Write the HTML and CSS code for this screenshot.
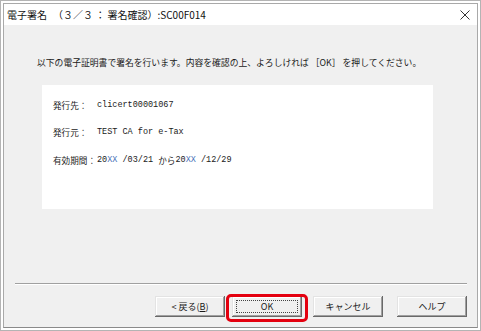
FILE: index.html
```html
<!DOCTYPE html>
<html lang="ja">
<head>
<meta charset="utf-8">
<title>電子署名</title>
<link rel="stylesheet" href="styles.css">
</head>
<body>
<div class="window">
  <div class="frame">
    <div class="titlebar">
      <span class="title"><span>電子署名</span><span class="title-sub">（３／３ ： 署名確認）:SC00F014</span></span>
      <svg class="close" width="10" height="10" viewBox="0 0 10 10" aria-label="閉じる">
        <path d="M0.5 0.5 L9.5 9.5 M9.5 0.5 L0.5 9.5" stroke="#333" stroke-width="1" fill="none"/>
      </svg>
    </div>
    <div class="content">
      <p class="intro">以下の電子証明書で署名を行います。内容を確認の上、よろしければ ［OK］ を押してください。</p>
      <div class="panel">
        <div class="row"><span class="label">発行先：</span><span class="val">clicert00001067</span></div>
        <div class="row"><span class="label">発行元：</span><span class="val">TEST CA for e-Tax</span></div>
        <div class="row"><span class="label">有効期間：</span><span class="val">20<span class="xx">XX</span> /03/21 </span><span class="kara">から</span><span class="val">20<span class="xx">XX</span> /12/29</span></div>
      </div>
      <div class="spacer"></div>
      <div class="separator"></div>
      <div class="buttons">
        <button class="btn btn-back">&lt; 戻る(<u>B</u>)</button>
        <button class="btn btn-ok"><span class="focus">OK</span><span class="ring"></span></button>
        <button class="btn btn-cancel">キャンセル</button>
        <button class="btn btn-help">ヘルプ</button>
      </div>
    </div>
  </div>
</div>
</body>
</html>
```

FILE: styles.css
```css
* {
  box-sizing: border-box;
}

html, body {
  margin: 0;
  padding: 0;
  background: #ffffff;
}

body {
  font-family: "Noto Sans CJK JP", "Liberation Sans", sans-serif;
  color: #1a1a1a;
}

.window {
  width: 481px;
  height: 331px;
  border: 1px solid #b4b4b4;
  padding: 2px;
  background: #ffffff;
}

.frame {
  height: 100%;
  display: flex;
  flex-direction: column;
  border: 1px solid #a9a9a9;
  border-bottom-color: #8a8a8a;
}

.titlebar {
  height: 21px;
  flex: none;
  display: flex;
  align-items: center;
  justify-content: space-between;
  padding: 0 7px 0 3px;
  background: #ffffff;
}

.title {
  font-size: 10px;
  line-height: 12px;
  color: #111;
  white-space: nowrap;
}

.title-sub {
  margin-left: 6px;
}

.close {
  display: block;
  margin-top: 1px;
}

.content {
  flex: 1;
  display: flex;
  flex-direction: column;
  background: #f0f0f0;
  padding: 32px 10px 10px 11px;
}

.intro {
  margin: 0 0 16px 22px;
  font-size: 8.8px;
  line-height: 12px;
  white-space: nowrap;
  color: #1a1a1a;
}

.panel {
  margin-left: 27px;
  width: 391px;
  height: 124px;
  background: #ffffff;
  padding: 6px 0 0 11px;
}

.row {
  display: flex;
  align-items: center;
  height: 27.5px;
  font-size: 8.6px;
  line-height: 12px;
  white-space: nowrap;
  color: #1a1a1a;
}

.label {
  flex: none;
  width: 44px;
}

.kara {
  flex: none;
}

.val {
  flex: none;
  font-family: "Liberation Mono", "Noto Sans CJK JP", monospace;
  font-size: 8.5px;
  white-space: pre;
}

.xx {
  color: #4a72b8;
}

.spacer {
  flex: 1;
}

.separator {
  height: 2px;
  border-top: 1px solid #a0a0a0;
  border-bottom: 1px solid #ffffff;
  margin-bottom: 11px;
}

.buttons {
  display: flex;
  justify-content: flex-end;
  height: 21px;
}

.btn {
  position: relative;
  width: 70px;
  height: 21px;
  padding: 0;
  border: none;
  background: #f0f0f0;
  font-family: "Noto Sans CJK JP", "Liberation Sans", sans-serif;
  font-size: 9px;
  color: #1a1a1a;
  box-shadow:
    inset -1px -1px 0 #696969,
    inset 1px 1px 0 #e3e3e3,
    inset -2px -2px 0 #a0a0a0,
    inset 2px 2px 0 #ffffff;
}

.btn-back {
  margin-right: 7px;
}

.btn-ok {
  margin-right: 11px;
  display: flex;
  align-items: stretch;
  justify-content: stretch;
  padding: 4px;
}

.btn-cancel {
  margin-right: 14px;
}

.focus {
  flex: 1;
  display: flex;
  align-items: center;
  justify-content: center;
  border: 1px dotted #444;
}

.ring {
  position: absolute;
  left: -6px;
  right: -6px;
  top: -2px;
  bottom: -5px;
  border: 3px solid #e4000f;
  border-radius: 5px;
  pointer-events: none;
}
```
